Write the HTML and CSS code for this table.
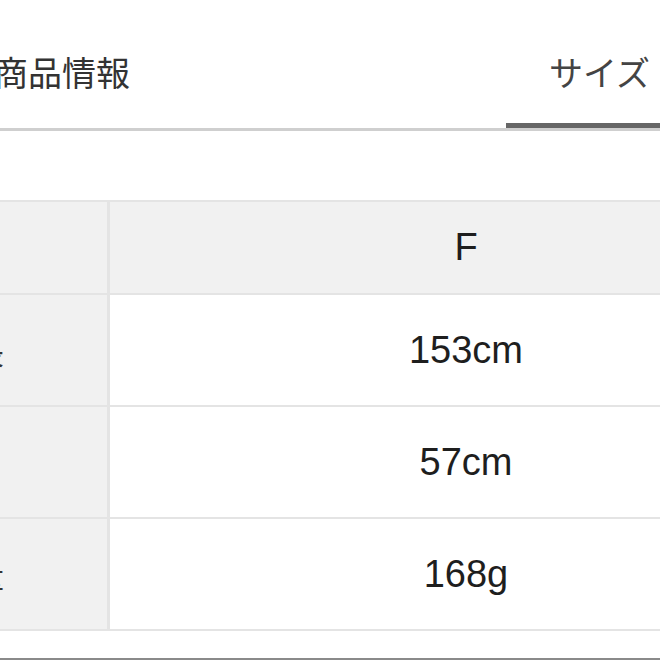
FILE: index.html
```html
<!DOCTYPE html>
<html lang="ja">
<head>
<meta charset="utf-8">
<title>サイズ</title>
<link rel="stylesheet" href="styles.css">
</head>
<body>
<div class="page">
  <nav class="tabs">
    <div class="tab tab-info">商品情報</div>
    <div class="tab tab-size is-active">サイズ</div>
  </nav>
  <table class="size-table">
    <tr class="head-row">
      <th class="label"></th>
      <th class="value">F</th>
    </tr>
    <tr>
      <th class="label">全長</th>
      <td class="value">153cm</td>
    </tr>
    <tr>
      <th class="label">幅</th>
      <td class="value">57cm</td>
    </tr>
    <tr>
      <th class="label">重量</th>
      <td class="value">168g</td>
    </tr>
  </table>
  <div class="next-section"></div>
</div>
</body>
</html>
```
FILE: styles.css
```css
html, body {
  margin: 0;
  padding: 0;
  background: #ffffff;
}
body {
  width: 660px;
  height: 660px;
  overflow: hidden;
  font-family: "Noto Sans CJK JP", "Liberation Sans", sans-serif;
  color: #222222;
}
.page {
  width: 660px;
  overflow: hidden;
}
.tabs {
  display: flex;
  justify-content: space-between;
  height: 128px;
  border-bottom: 3px solid #cfcfcf;
}
.tab {
  box-sizing: border-box;
  height: 128px;
  padding-top: 51px;
  font-size: 34px;
  line-height: 42px;
  color: #333333;
  white-space: nowrap;
}
.tab-info {
  margin-left: -6px;
}
.tab-size {
  width: 187px;
  margin-right: -33px;
  text-align: center;
  color: #444444;
}
.tab.is-active {
  border-bottom: 5px solid #666666;
}
.size-table {
  margin-top: 69px;
  margin-left: -165px;
  width: 987px;
  border-spacing: 0;
  border-top: 2px solid #e4e4e4;
  table-layout: fixed;
}
.size-table th,
.size-table td {
  padding: 0;
  border-bottom: 2px solid #e4e4e4;
  text-align: center;
  vertical-align: middle;
  font-weight: normal;
}
.size-table .label {
  width: 272px;
  background: #f1f1f1;
  border-right: 3px solid #e4e4e4;
  font-size: 33px;
  color: #333333;
}
.size-table .value {
  font-family: "Liberation Sans", "Noto Sans CJK JP", sans-serif;
  font-size: 38px;
  color: #1e1e1e;
  background: #ffffff;
}
.size-table tr {
  height: 112px;
}
.size-table .head-row {
  height: 93px;
}
.size-table .head-row th {
  background: #f1f1f1;
}
.next-section {
  margin-top: 27px;
  border-top: 2px solid #8a8a8a;
  height: 10px;
}
```
